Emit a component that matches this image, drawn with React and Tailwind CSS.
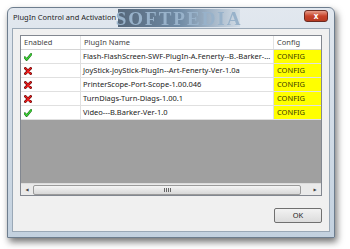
import React from 'react';

const plugins = [
  { on: true, name: 'Flash-FlashScreen-SWF-PlugIn-A.Fenerty--B.-Barker-...' },
  { on: false, name: 'JoyStick-JoyStick-PlugIn--Art-Fenerty-Ver-1.0a' },
  { on: false, name: 'PrinterScope-Port-Scope-1.00.046' },
  { on: false, name: 'TurnDiags-Turn-Diags-1.00.1' },
  { on: true, name: 'Video---B.Barker-Ver-1.0' },
];

const Check = () => (
  <svg width="8" height="8" viewBox="0 0 9 9">
    <path d="M1 5 L3 7.5 L8 1.5" fill="none" stroke="#1a6a14" strokeWidth="2.6" strokeLinecap="round" strokeLinejoin="round" />
    <path d="M1 5 L3 7.5 L8 1.5" fill="none" stroke="#3ed83a" strokeWidth="1.4" strokeLinecap="round" strokeLinejoin="round" />
  </svg>
);

const Cross = () => (
  <svg width="8" height="8" viewBox="0 0 9 9">
    <path d="M1.5 1.5 L7.5 7.5 M7.5 1.5 L1.5 7.5" fill="none" stroke="#5a0a0a" strokeWidth="3" strokeLinecap="round" />
    <path d="M1.5 1.5 L7.5 7.5 M7.5 1.5 L1.5 7.5" fill="none" stroke="#ee1c1c" strokeWidth="1.6" strokeLinecap="round" />
  </svg>
);

const App = () => {
  return (
    <div className="w-[350px] h-[249px] bg-white pt-[7px] pl-[7px] overflow-hidden" style={{ fontFamily: '"Noto Sans", "DejaVu Sans", sans-serif' }}>
      {/* Window */}
      <div className="w-[328px] h-[231px] flex flex-col rounded-t-[6px] border border-[#6d7d8e] bg-gradient-to-b from-[#e2e8ef] to-[#c3d1df] shadow-[2px_4px_7px_rgba(0,0,0,0.55)]">
        {/* Title bar */}
        <div className="h-[20px] flex items-center pl-[5px] pr-[6px]">
          <span className="text-[7.5px] text-[#1e1e1e] whitespace-nowrap">PlugIn Control and Activation</span>
          <div className="ml-[2px] h-[18px] w-[122px] flex items-center justify-center bg-gradient-to-r from-[#56687b] via-[#6f8aa4] to-[#d2dce6] blur-[0.6px]">
            <span className="text-[19px] font-bold tracking-[2px] text-[#98b2ca] leading-none" style={{ fontFamily: '"Liberation Serif", serif' }}>SOFTPEDIA</span>
          </div>
          <div className="flex-1" />
          <div className="w-[24px] h-[12px] -mt-[5px] rounded-[3px] border border-[#6b2a22] bg-gradient-to-b from-[#e49a88] via-[#c8432b] to-[#b53a22] flex items-center justify-center">
            <span className="text-[8px] font-bold text-white leading-none">x</span>
          </div>
        </div>
        {/* Client area */}
        <div className="flex-1 mx-[4px] mb-[5px] bg-[#f0f0f0] border border-[#9aa8b6] flex flex-col pt-[6px] px-[7px] pb-[8px]">
          <div className="h-[161px] border border-[#828790] bg-[#a0a0a0] flex flex-col">
            <div className="h-[14px] flex bg-white border-b border-[#d5d5d5] text-[7.5px] text-[#444]">
              <div className="w-[60px] pl-[3px] flex items-center border-r border-[#e3e3e3]">Enabled</div>
              <div className="w-[193px] pl-[3px] flex items-center border-r border-[#e3e3e3]">PlugIn Name</div>
              <div className="flex-1 pl-[3px] flex items-center">Config</div>
            </div>
            {plugins.map((p) => (
              <div key={p.name} className="h-[14px] flex bg-white border-b border-[#e0e0e0] text-[7.5px] text-[#222]">
                <div className="w-[60px] pl-[3px] flex items-center border-r border-[#e0e0e0]">
                  {p.on ? <Check /> : <Cross />}
                </div>
                <div className="w-[193px] pl-[2px] flex items-center border-r border-[#e0e0e0] whitespace-nowrap overflow-hidden">{p.name}</div>
                <div className="flex-1 pl-[3px] flex items-center bg-[#ffff00] text-[#3a3a00]">CONFIG</div>
              </div>
            ))}
            <div className="flex-1" />
            {/* Scrollbar */}
            <div className="h-[12px] flex items-center bg-[#eaeaea] border-t border-[#dcdcdc]">
              <div className="w-[12px] flex justify-center text-[4px] text-[#444]">◀</div>
              <div className="flex-1 h-[10px] rounded-[2px] border border-[#9a9a9a] bg-gradient-to-b from-[#f4f4f4] to-[#d8d8d8] flex items-center justify-center">
                <div className="flex gap-[1px]">
                  <div className="w-[1px] h-[4px] bg-[#666]" />
                  <div className="w-[1px] h-[4px] bg-[#666]" />
                  <div className="w-[1px] h-[4px] bg-[#666]" />
                  <div className="w-[1px] h-[4px] bg-[#666]" />
                </div>
              </div>
              <div className="w-[12px] ml-[8px] flex justify-center text-[4px] text-[#444]">▶</div>
            </div>
          </div>
          <div className="flex-1" />
          <div className="flex justify-end">
            <div className="w-[48px] h-[15px] rounded-[2px] border border-[#707070] bg-gradient-to-b from-[#f2f2f2] to-[#dcdcdc] flex items-center justify-center text-[7.5px] text-[#222]">OK</div>
          </div>
        </div>
      </div>
    </div>
  );
};

export default App;
